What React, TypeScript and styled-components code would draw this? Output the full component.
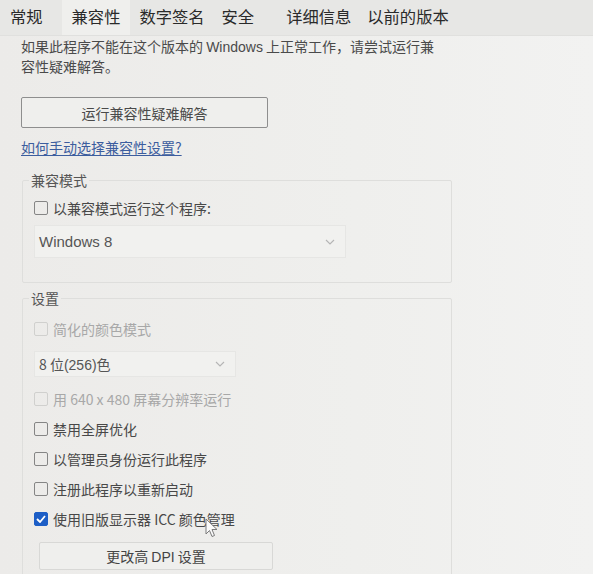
import React from "react";
import styled, { createGlobalStyle } from "styled-components";

const GlobalStyle = createGlobalStyle`
  html, body {
    margin: 0;
    padding: 0;
    background: #eeeeec;
  }
  body {
    font-family: "Noto Sans CJK SC", "Liberation Sans", sans-serif;
    color: #454545;
  }
`;

// left offsets measured between the tab labels
const tabs = [
  { label: "常规", ml: 10 },
  { label: "兼容性", ml: 19, active: true },
  { label: "数字签名", ml: 9 },
  { label: "安全", ml: 17 },
  { label: "详细信息", ml: 32 },
  { label: "以前的版本", ml: 16 },
];

const settings = [
  { label: "用 640 x 480 屏幕分辨率运行", disabled: true, checked: false },
  { label: "禁用全屏优化", disabled: false, checked: false },
  { label: "以管理员身份运行此程序", disabled: false, checked: false },
  { label: "注册此程序以重新启动", disabled: false, checked: false },
  { label: "使用旧版显示器 ICC 颜色管理", disabled: false, checked: true },
];

const Chevron = () => (
  <svg width="10" height="6" viewBox="0 0 10 6">
    <path d="M1 1 L5 5 L9 1" fill="none" stroke="#b5b5b5" strokeWidth="1.1" />
  </svg>
);

const Cursor = () => (
  <svg width="14" height="20" viewBox="0 0 14 20">
    <path
      d="M1 1 L1 16 L4.5 12.5 L7 18.5 L9.5 17.5 L7 11.5 L12 11.5 Z"
      fill="#fafafa"
      stroke="#7a7a7a"
      strokeWidth="1"
      strokeLinejoin="round"
    />
  </svg>
);

const App = () => {
  return (
    <Page>
      <GlobalStyle />
      <TabBar>
        {tabs.map((t) => (
          <Tab key={t.label} $active={!!t.active} $ml={t.ml}>
            {t.label}
          </Tab>
        ))}
      </TabBar>
      <Content>
        <Intro>
          如果此程序不能在这个版本的 <Latin>Windows</Latin> 上正常工作，请尝试运行兼
          <br />
          容性疑难解答。
        </Intro>
        <WideButton>运行兼容性疑难解答</WideButton>
        <HelpLink>如何手动选择兼容性设置?</HelpLink>

        <Group $height={113} $top={13}>
          <Legend>兼容模式</Legend>
          <CheckRow>
            <Box />
            <CheckLabel>以兼容模式运行这个程序:</CheckLabel>
          </CheckRow>
          <Select $width={312}>
            <Latin>Windows 8</Latin>
            <Chevron />
          </Select>
        </Group>

        <Group $height={300} $top={5} $pad={9}>
          <Legend>设置</Legend>
          <CheckRow>
            <Box $disabled />
            <CheckLabel $disabled>简化的颜色模式</CheckLabel>
          </CheckRow>
          <Select $width={202} $small>
            <span>
              8 位<Latin>(256)</Latin>色
            </span>
            <Chevron />
          </Select>
          <SettingList>
            {settings.map((s) => (
              <CheckRow key={s.label} $tight>
                <Box $disabled={s.disabled} $checked={s.checked}>
                  {s.checked && (
                    <svg width="10" height="8" viewBox="0 0 10 8">
                      <path d="M1 4 L4 7 L9 1" fill="none" stroke="#fff" strokeWidth="1.8" />
                    </svg>
                  )}
                </Box>
                <CheckLabel $disabled={s.disabled}>{s.label}</CheckLabel>
                {s.checked && (
                  <CursorSpot>
                    <Cursor />
                  </CursorSpot>
                )}
              </CheckRow>
            ))}
          </SettingList>
          <DpiButton>
            <span>
              更改高 <Latin>DPI</Latin> 设置
            </span>
          </DpiButton>
        </Group>
      </Content>
    </Page>
  );
};

export default App;

const Page = styled.div`
  width: 593px;
  height: 574px;
  overflow: hidden;
  background: linear-gradient(90deg, #ecebe9 0%, #efefed 60%, #f2f2f1 100%);
`;

const TabBar = styled.div`
  display: flex;
  align-items: stretch;
  height: 35px;
  background: #e7e7e5;
  border-bottom: 1px solid #e0e0de;
`;

const Tab = styled.div<{ $active: boolean; $ml: number }>`
  display: flex;
  align-items: center;
  padding: 0 ${(p) => (p.$active ? 10 : 0)}px 3px;
  margin-left: ${(p) => p.$ml}px;
  font-size: 16.3px;
  color: #2a2a2a;
  background: ${(p) => (p.$active ? "#efefed" : "transparent")};
`;

const Content = styled.div`
  padding: 0 0 0 21px;
`;

const Intro = styled.p`
  margin: 0;
  font-size: 14px;
  line-height: 20px;
  color: #4a4a4a;
`;

const Latin = styled.span`
  font-family: "Liberation Sans", "Noto Sans", sans-serif;
  line-height: 1;
`;

const WideButton = styled.div`
  display: flex;
  align-items: center;
  justify-content: center;
  box-sizing: border-box;
  width: 247px;
  height: 31px;
  margin-top: 21px;
  border: 1.5px solid #8e8e8e;
  border-radius: 2px;
  background: #efefed;
  font-size: 14px;
  color: #4a4a4a;
`;

const HelpLink = styled.a`
  display: block;
  margin-top: 9px;
  font-size: 14px;
  line-height: 20px;
  color: #3c5d9e;
  text-decoration: underline;
  text-underline-offset: 2px;
`;

const Group = styled.fieldset<{ $height: number; $top: number; $pad?: number }>`
  box-sizing: border-box;
  width: 430px;
  height: ${(p) => p.$height}px;
  margin: ${(p) => p.$top}px 0 0 1px;
  padding: ${(p) => p.$pad ?? 6}px 0 0 11px;
  border: 1px solid #dededc;
  border-radius: 2px;
`;

const Legend = styled.legend`
  padding: 0 2px;
  margin-left: -5px;
  font-size: 14px;
  color: #555;
`;

const CheckRow = styled.div<{ $tight?: boolean }>`
  position: relative;
  display: flex;
  align-items: center;
  gap: 5px;
  height: ${(p) => (p.$tight ? 30 : 24)}px;
`;

const Box = styled.span<{ $disabled?: boolean; $checked?: boolean }>`
  display: inline-flex;
  align-items: center;
  justify-content: center;
  box-sizing: border-box;
  width: 14px;
  height: 14px;
  border: 1.2px solid ${(p) => (p.$checked ? "#1d5ec6" : p.$disabled ? "#d0d0ce" : "#858585")};
  border-radius: 2px;
  background: ${(p) => (p.$checked ? "#1d5ec6" : "transparent")};
`;

const CheckLabel = styled.span<{ $disabled?: boolean }>`
  font-size: 14px;
  color: ${(p) => (p.$disabled ? "#a8a8a8" : "#484848")};
`;

const Select = styled.div<{ $width: number; $small?: boolean }>`
  display: flex;
  align-items: center;
  justify-content: space-between;
  box-sizing: border-box;
  width: ${(p) => p.$width}px;
  height: ${(p) => (p.$small ? 26 : 33)}px;
  margin-top: ${(p) => (p.$small ? 10 : 5)}px;
  padding: 0 10px 0 4px;
  border: 1px solid #e6e6e4;
  background: #f1f1ef;
  font-size: ${(p) => (p.$small ? 14 : 15)}px;
  color: #555;
`;

const SettingList = styled.div`
  display: flex;
  flex-direction: column;
  margin-top: 7px;
`;

const CursorSpot = styled.span`
  position: absolute;
  left: 171px;
  top: 14px;
`;

const DpiButton = styled.div`
  display: flex;
  align-items: center;
  justify-content: center;
  box-sizing: border-box;
  width: 234px;
  height: 28px;
  margin: 8px 0 0 5px;
  border: 1px solid #d8d8d6;
  border-radius: 2px;
  background: #efefed;
  font-size: 14px;
  color: #444;
`;
